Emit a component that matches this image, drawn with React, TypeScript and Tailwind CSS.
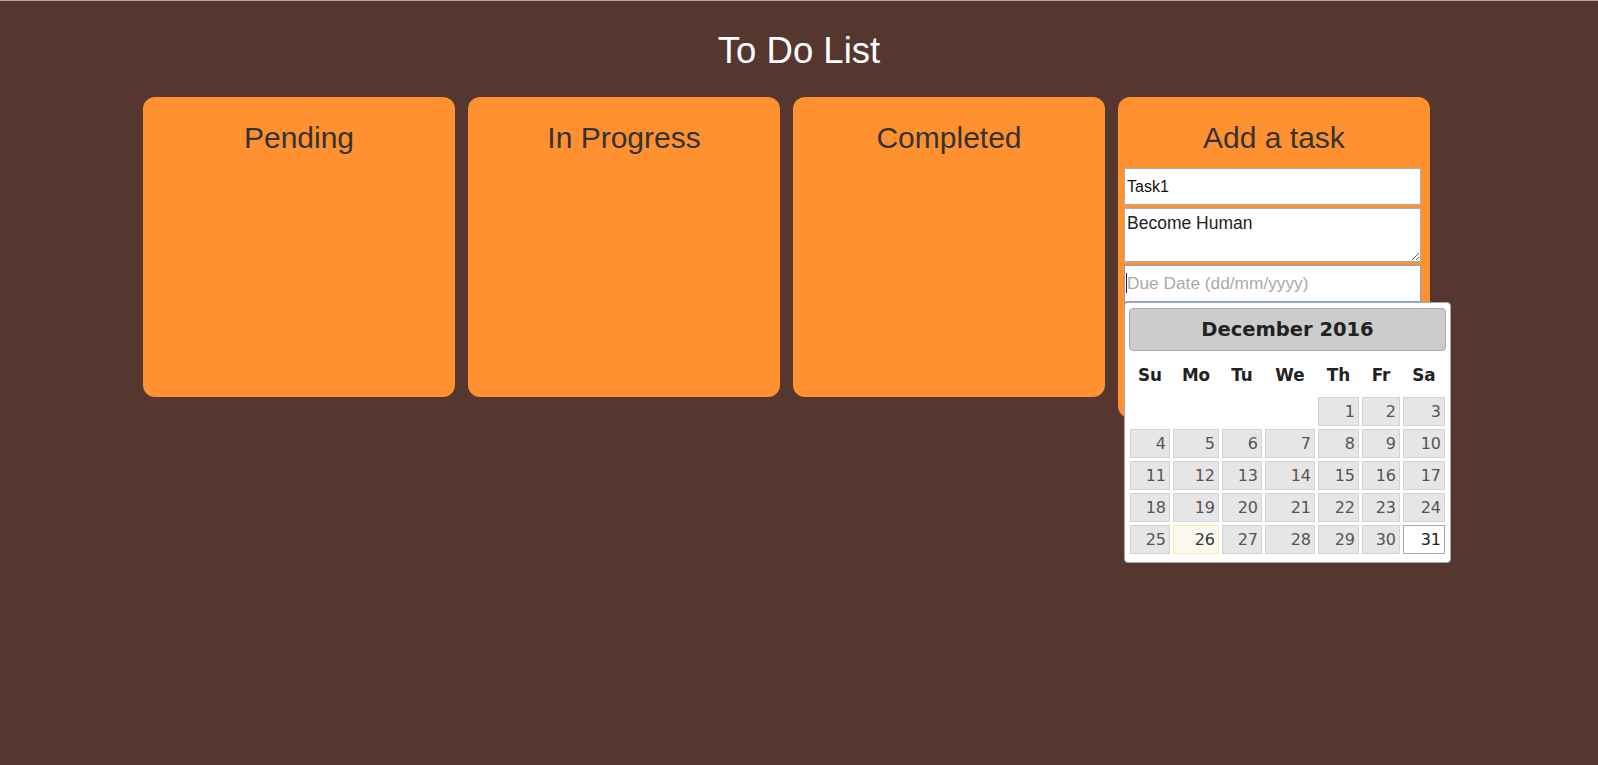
const columns = ["Su", "Mo", "Tu", "We", "Th", "Fr", "Sa"];

// December 2016 starts on a Thursday
const days: (number | null)[] = [null, null, null, null, ...Array.from({ length: 31 }, (_, i) => i + 1)];

const TODAY = 26;
const SELECTED = 31;

const Column = ({ title }: { title: string }) => (
  <div className="h-[300px] w-[312px] rounded-[12px] bg-[#ff9130] pt-[24px]">
    <h2 className="text-center text-[30px] leading-[34px] text-[#333]">{title}</h2>
  </div>
);

const DatePicker = () => (
  <div className="absolute left-0 top-full z-10 w-[327px] rounded-[4px] border border-[#aaaaaa] bg-white px-[4px] pb-[8px] pt-[5px] font-['DejaVu_Sans',Verdana,sans-serif]">
    <div className="flex h-[43px] items-center justify-center rounded-[4px] border border-[#aaaaaa] bg-[#cccccc] text-[19.5px] font-bold text-[#222]">
      December 2016
    </div>
    <div className="grid grid-cols-[40px_46px_40px_50px_41px_38px_42px] gap-x-[3px] px-[1px]">
      {columns.map((c) => (
        <div key={c} className="flex h-[45px] items-center justify-center pt-[4px] text-[16.8px] font-bold text-[#222]">
          {c}
        </div>
      ))}
    </div>
    <div className="mt-[1px] grid grid-cols-[40px_46px_40px_50px_41px_38px_42px] gap-x-[3px] gap-y-[3px] px-[1px]">
      {days.map((d, i) =>
        d === null ? (
          <div key={i} className="h-[29px]" />
        ) : (
          <div
            key={i}
            className={
              d === TODAY
                ? "flex h-[29px] items-center justify-end border border-[#fcefa1] bg-[#fbf9ee] pr-[3px] text-[16px] text-[#363636]"
                : d === SELECTED
                ? "flex h-[29px] items-center justify-end border border-[#aaaaaa] bg-white pr-[3px] text-[16px] text-[#212121]"
                : "flex h-[29px] items-center justify-end border border-[#d3d3d3] bg-[#e6e6e6] pr-[3px] text-[16px] text-[#555]"
            }
          >
            {d}
          </div>
        )
      )}
    </div>
  </div>
);

const AddTask = () => (
  <div className="h-[321px] w-[312px] rounded-[12px] bg-[#ff9130] px-[6px] pt-[24px]">
    <h2 className="text-center text-[30px] leading-[34px] text-[#333]">Add a task</h2>
    <input
      readOnly
      value="Task1"
      className="mt-[13px] block h-[37px] w-[297px] border border-[#a9afba] bg-white pl-[2px] text-[16px] text-[#111] outline-none"
    />
    <textarea
      readOnly
      value="Become Human"
      className="mt-[3px] block h-[54px] w-[297px] border border-[#a9afba] bg-white pl-[2px] pt-[4px] text-[17.5px] leading-[20px] text-[#222] outline-none"
    />
    <div className="relative mt-[3px] w-[297px]">
      <input
        readOnly
        placeholder="Due Date (dd/mm/yyyy)"
        className="block h-[37px] w-full border border-[#80a1da] bg-white pl-[2px] text-[17.3px] text-[#222] outline-none placeholder:text-[#a9a9a9]"
      />
      <span className="absolute left-[2px] top-[8px] h-[20px] w-px bg-[#222]" />
      <DatePicker />
    </div>
  </div>
);

export default function App() {
  return (
    <div className="min-h-screen w-full border-t border-[#b0a8a6] bg-[#553730] font-['Liberation_Sans',Arial,sans-serif]">
      <h1 className="mt-[30px] text-center text-[36.5px] leading-[40px] text-white">To Do List</h1>
      <div className="mt-[26px] flex items-start gap-[13px] pl-[143px]">
        <Column title="Pending" />
        <Column title="In Progress" />
        <Column title="Completed" />
        <AddTask />
      </div>
    </div>
  );
}
